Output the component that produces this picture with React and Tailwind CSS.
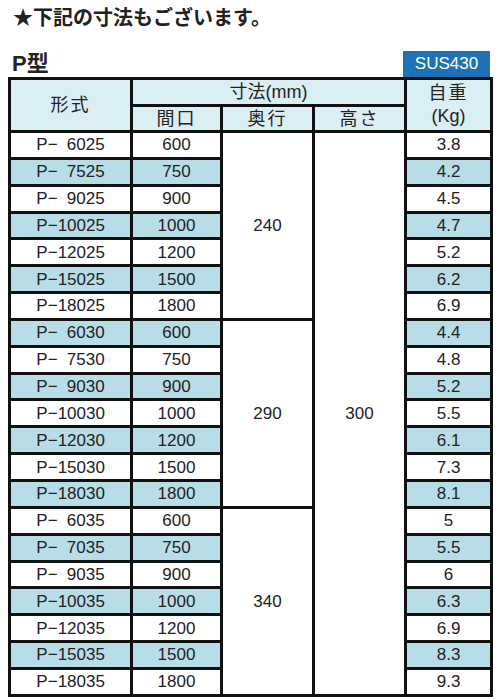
import React from "react";

const groups = [
  {
    depth: "240",
    rows: [
      ["6025", "600", "3.8"],
      ["7525", "750", "4.2"],
      ["9025", "900", "4.5"],
      ["10025", "1000", "4.7"],
      ["12025", "1200", "5.2"],
      ["15025", "1500", "6.2"],
      ["18025", "1800", "6.9"],
    ],
  },
  {
    depth: "290",
    rows: [
      ["6030", "600", "4.4"],
      ["7530", "750", "4.8"],
      ["9030", "900", "5.2"],
      ["10030", "1000", "5.5"],
      ["12030", "1200", "6.1"],
      ["15030", "1500", "7.3"],
      ["18030", "1800", "8.1"],
    ],
  },
  {
    depth: "340",
    rows: [
      ["6035", "600", "5"],
      ["7035", "750", "5.5"],
      ["9035", "900", "6"],
      ["10035", "1000", "6.3"],
      ["12035", "1200", "6.9"],
      ["15035", "1500", "8.3"],
      ["18035", "1800", "9.3"],
    ],
  },
];

const cell = "border-[3px] border-[#111] text-center p-0";

const App = () => {
  let idx = 0;
  return (
    <div className="w-[498px] h-[700px] bg-white text-[#222] font-['Liberation_Sans','Noto_Sans_CJK_JP',sans-serif]">
      <div className="pl-[13px] pt-[5px] text-[20px] font-bold leading-[27px]">
        ★下記の寸法もございます。
      </div>
      <div className="flex items-end justify-between pl-[12px] pr-[8px] mt-[19px]">
        <div className="text-[22px] font-bold leading-[24px] pb-[1px]">P型</div>
        <div className="w-[87px] h-[26px] bg-[#1f72b8] text-white text-[17px] leading-[26px] text-center">
          SUS430
        </div>
      </div>
      <table className="ml-[8px] w-[482px] table-fixed border-collapse text-[17px] leading-none">
        <colgroup>
          <col className="w-[122px]" />
          <col className="w-[90px]" />
          <col className="w-[92px]" />
          <col className="w-[92px]" />
          <col className="w-[86px]" />
        </colgroup>
        <thead className="text-[18px]">
          <tr className="h-[27px] bg-[#dbeef4]">
            <td rowSpan={2} className={cell + " tracking-[2px]"}>形式</td>
            <td colSpan={3} className={cell}>寸法(mm)</td>
            <td rowSpan={2} className={cell + " leading-[23px]"}>
              <div className="tracking-[2px]">自重</div>
              <div>(Kg)</div>
            </td>
          </tr>
          <tr className="h-[26px] bg-[#dbeef4]">
            <td className={cell + " tracking-[2px]"}>間口</td>
            <td className={cell + " tracking-[2px]"}>奥行</td>
            <td className={cell + " tracking-[2px]"}>高さ</td>
          </tr>
        </thead>
        <tbody>
          {groups.map((g, gi) =>
            g.rows.map((r, ri) => {
              const stripe = idx++ % 2 === 1 ? "bg-[#b8dde7]" : "bg-white";
              return (
                <tr key={r[0]} className="h-[26.85px]">
                  <td className={cell + " " + stripe}>
                    <div className="flex justify-center">
                      <span>P−</span>
                      <span className="inline-block w-[47px] text-right">{r[0]}</span>
                    </div>
                  </td>
                  <td className={cell + " " + stripe}>{r[1]}</td>
                  {ri === 0 && (
                    <td rowSpan={7} className={cell + " bg-white"}>
                      {g.depth}
                    </td>
                  )}
                  {gi === 0 && ri === 0 && (
                    <td rowSpan={21} className={cell + " bg-white"}>
                      300
                    </td>
                  )}
                  <td className={cell + " " + stripe}>{r[2]}</td>
                </tr>
              );
            })
          )}
        </tbody>
      </table>
    </div>
  );
};

export default App;
